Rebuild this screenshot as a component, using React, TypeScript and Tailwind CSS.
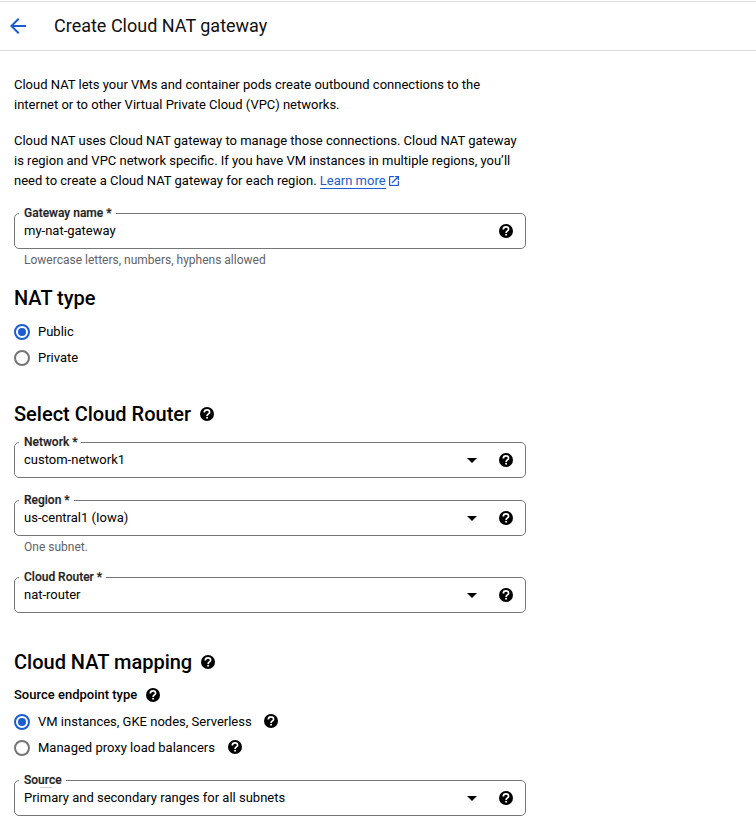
import type { ReactNode } from "react";

function Help() {
  return (
    <svg className="size-[14px] shrink-0" viewBox="0 0 14 14" fill="none">
      <circle cx="7" cy="7" r="7" fill="#000" />
      <path d="M4.300 5.400C4.300 3.800 5.500 2.900 7 2.900s2.600.9 2.600 2.300c0 1.700-2.500 1.800-2.500 3.700" stroke="#fff" strokeWidth="1.700" />
      <rect x="6.200" y="9.900" width="1.800" height="1.600" fill="#fff" />
    </svg>
  );
}

function Field({ label, value, select = true }: { label: string; value: string; select?: boolean }) {
  return (
    <div className="relative flex h-9 w-[512px] items-center rounded-[5px] border border-[#747775] pl-[9px] pr-3">
      <span className="absolute -top-[9px] left-1 bg-white pl-[5px] pr-1 text-[12px] font-medium leading-4 text-[#1f1f1f] [-webkit-text-stroke:0.2px_#1f1f1f]">
        {label}
        {label === "Source" && <span className="absolute left-[21px] top-[15px] h-px w-3 bg-[#cfcfcf]" />}
      </span>
      <span className="flex-1 leading-5">{value}</span>
      {select && (
        <svg className="mr-[22px] h-[5px] w-[10px]" viewBox="0 0 10 5">
          <path d="M0 0h10L5 5z" />
        </svg>
      )}
      <Help />
    </div>
  );
}

function Radio({ checked, children }: { checked?: boolean; children: ReactNode }) {
  return (
    <label className="flex h-[26px] items-center">
      <span
        className={
          checked
            ? "mr-2 flex size-4 items-center justify-center rounded-full border-2 border-[#1a5dd0]"
            : "mr-2 flex size-4 items-center justify-center rounded-full border-2 border-[#757575]"
        }
      >
        {checked && <span className="size-2 rounded-full bg-[#1a5dd0]" />}
      </span>
      {children}
    </label>
  );
}

export default function App() {
  return (
    <div className="h-[817px] w-[756px] overflow-hidden bg-white pt-px font-[Roboto,sans-serif] text-[13px] text-black">
      <header className="flex h-[50px] items-center border-y border-[#dcdcdc] pl-[10px]">
        <svg className="size-4" viewBox="4 4 16 16" fill="#1a5dd0">
          <path d="M20 11H7.830l5.590-5.590L12 4l-8 8 8 8 1.410-1.410L7.830 13H20v-2z" />
        </svg>
        <h1 className="ml-7 text-[18px] leading-6 text-[#111]">Create Cloud NAT gateway</h1>
      </header>
      <main className="px-[14px] pt-6">
        <p className="leading-5">
          Cloud NAT lets your VMs and container pods create outbound connections to the
          <br />
          internet or to other Virtual Private Cloud (VPC) networks.
        </p>
        <p className="mt-4 leading-5">
          Cloud NAT uses Cloud NAT gateway to manage those connections. Cloud NAT gateway
          <br />
          is region and VPC network specific. If you have VM instances in multiple regions, you’ll
          <br />
          need to create a Cloud NAT gateway for each region.{" "}
          <a className="border-b border-[#1a5dd0] text-[#1a5dd0]">Learn more</a>
          <svg className="ml-[3px] inline size-[10px] align-[-1px]" viewBox="3 3 18 18" fill="#1a5dd0">
            <path d="M19 19H5V5h7V3H5c-1.110 0-2 .9-2 2v14c0 1.100.89 2 2 2h14c1.100 0 2-.9 2-2v-7h-2v7zM14 3v2h3.590l-9.830 9.830 1.410 1.410L19 6.410V10h2V3h-7z" stroke="#1a5dd0" strokeWidth="0.4" />
          </svg>
        </p>
        <div className="mt-[22px]">
          <Field label="Gateway name *" value="my-nat-gateway" select={false} />
        </div>
        <p className="ml-[10px] mt-[3px] text-[12px] leading-4 text-[#5f6368]">
          Lowercase letters, numbers, hyphens allowed
        </p>
        <h2 className="mt-[18px] text-[20px] font-medium leading-6">NAT type</h2>
        <div className="mt-[9px]">
          <Radio checked>Public</Radio>
          <Radio>Private</Radio>
        </div>
        <h2 className="mt-[31px] flex items-center gap-[9px] text-[20px] font-medium leading-6">
          Select Cloud Router <Help />
        </h2>
        <div className="mt-4">
          <Field label="Network *" value="custom-network1" />
        </div>
        <div className="mt-[22px]">
          <Field label="Region *" value="us-central1 (Iowa)" />
        </div>
        <p className="ml-[10px] mt-[3px] text-[12px] leading-4 text-[#5f6368]">One subnet.</p>
        <div className="mt-[22px]">
          <Field label="Cloud Router *" value="nat-router" />
        </div>
        <h2 className="mt-[37px] flex items-center gap-[9px] text-[20px] font-medium leading-6">
          Cloud NAT mapping <Help />
        </h2>
        <div className="mt-[11px] flex h-5 items-center gap-[9px] font-medium">
          Source endpoint type <Help />
        </div>
        <div className="mt-[4px]">
          <Radio checked>
            <span className="mr-3">VM instances, GKE nodes, Serverless</span>
            <span className="pb-0.5">
              <Help />
            </span>
          </Radio>
          <Radio>
            <span className="mr-[13px]">Managed proxy load balancers</span>
            <span className="pb-0.5">
              <Help />
            </span>
          </Radio>
        </div>
        <div className="mt-[19px]">
          <Field label="Source" value="Primary and secondary ranges for all subnets" />
        </div>
      </main>
    </div>
  );
}
